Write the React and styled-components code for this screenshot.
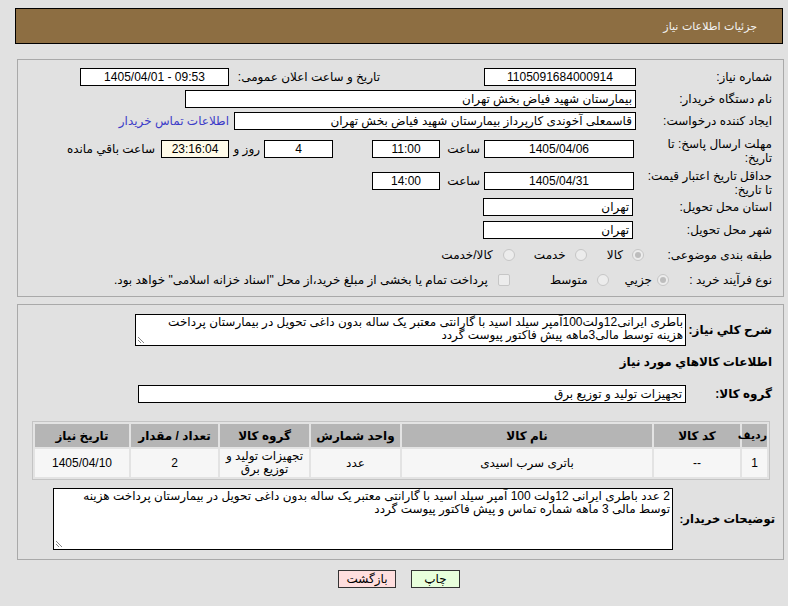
import React from 'react';
import styled, { createGlobalStyle } from 'styled-components';

const Global = createGlobalStyle`
  html, body { margin: 0; padding: 0; background: #e1e1e1; }
  body { font-family: "Liberation Sans", "DejaVu Sans", sans-serif; font-size: 12px; color: #000; }
`;

const Page = styled.div`
  direction: rtl;
  width: 788px;
  box-sizing: border-box;
  padding: 8px 5px 0 15px;
`;

const Header = styled.div`
  height: 34px;
  border: 1px solid #000;
  background: #8d6e42;
  color: #f4f4f4;
  display: flex;
  align-items: center;
  padding-right: 25px;
  font-family: "DejaVu Sans", sans-serif;
  font-size: 11px;
`;

const Panel = styled.div`
  margin: ${p => p.mt || 0}px -1px 0 2px;
  border: 1px solid #a9a9a9;
  padding: ${p => p.pad};
  display: flex;
  flex-direction: column;
`;

const Row = styled.div`
  display: flex;
  align-items: center;
  height: ${p => p.h}px;
  margin-top: ${p => p.mt || 0}px;
  flex-shrink: 0;
`;

const Label = styled.div`
  width: ${p => p.w || 147}px;
  flex-shrink: 0;
  box-sizing: border-box;
  padding-right: ${p => p.pr ?? 11}px;
  line-height: 14px;
  white-space: nowrap;
  font-weight: ${p => (p.bold ? 'bold' : 'normal')};
  font-size: ${p => p.fs || 12}px;
  margin-top: ${p => p.mt || 0}px;
`;

const Field = styled.div`
  width: ${p => p.w}px;
  height: 18px;
  box-sizing: border-box;
  flex-shrink: 0;
  border: 1px solid #000;
  background: ${p => p.bg || '#fff'};
  margin-right: ${p => p.mr || 0}px;
  text-align: ${p => p.align || 'center'};
  direction: ${p => (p.ltr ? 'ltr' : 'rtl')};
  line-height: 16px;
  padding: 0 3px;
  white-space: nowrap;
  overflow: hidden;
`;

const Text = styled.span`
  flex-shrink: 0;
  white-space: nowrap;
  margin-right: ${p => p.mr || 0}px;
  width: ${p => (p.w ? `${p.w}px` : 'auto')};
  color: ${p => p.color || '#000'};
`;

const Radio = styled.span`
  width: 12px;
  height: 12px;
  box-sizing: border-box;
  flex-shrink: 0;
  border-radius: 50%;
  border: 1px solid #c6c6c6;
  background: #ececec;
  margin-right: ${p => p.mr || 0}px;
  display: flex;
  align-items: center;
  justify-content: center;
  &::after {
    content: '';
    width: 6px;
    height: 6px;
    border-radius: 50%;
    background: ${p => (p.on ? '#bdbdbd' : 'transparent')};
  }
`;

const Check = styled.span`
  width: 12px;
  height: 12px;
  box-sizing: border-box;
  flex-shrink: 0;
  border: 1px solid #c6c6c6;
  background: #ececec;
  border-radius: 2px;
  margin-right: ${p => p.mr || 0}px;
`;

const Heading = styled.div`
  font-weight: bold;
  padding-right: 11px;
  line-height: 14px;
  margin-top: ${p => p.mt}px;
`;

const TextBox = styled.div`
  position: relative;
  width: ${p => p.w}px;
  height: ${p => p.h}px;
  box-sizing: border-box;
  flex-shrink: 0;
  border: 1px solid #000;
  background: #fff;
  padding: 1px 2px 0;
  line-height: 13px;
  overflow: hidden;
  div { white-space: nowrap; }
`;

const Grip = styled.svg`
  position: absolute;
  left: 1px;
  bottom: 1px;
`;

const Table = styled.table`
  table-layout: fixed;
  width: 738px;
  margin: ${p => p.mt}px 13px 0 0;
  border: 1px solid #c4c4c4;
  border-spacing: 2px;
  background: #e3e3e3;
  font-size: 12px;
  th {
    background: #b5b5b5;
    height: 23px;
    font-weight: bold;
    padding: 0;
    white-space: nowrap;
  }
  th.narrow { font-size: 11px; letter-spacing: -0.5px; }
  td {
    background: #f6f6f6;
    height: 28px;
    text-align: center;
    padding: 0;
    line-height: 13px;
  }
`;

const Buttons = styled.div`
  display: flex;
  justify-content: center;
  gap: 15px;
  margin-top: 10px;
`;

const Button = styled.div`
  width: ${p => p.w}px;
  height: 18px;
  box-sizing: border-box;
  border: 1px solid #333;
  background: ${p => p.bg};
  text-align: center;
  line-height: 16px;
`;

const ResizeGrip = () => (
  <Grip width="8" height="8" viewBox="0 0 8 8">
    <path d="M1 1L7 7M1 4L4 7" stroke="#888" strokeWidth="1" fill="none" />
  </Grip>
);

const cols = [25, 86, 250, 89, 89, 87, 94];

export default function App() {
  return (
    <Page>
      <Global />
      <Header>جزئیات اطلاعات نیاز</Header>

      <Panel mt={15} pad="6px 0 6px 0">
        <Row h={22}>
          <Label>شماره نیاز:</Label>
          <Field w={152}>1105091684000914</Field>
          <Text mr={104} w={144}>تاریخ و ساعت اعلان عمومی:</Text>
          <Field w={149} mr={7} ltr>1405/04/01 - 09:53</Field>
        </Row>
        <Row h={22}>
          <Label>نام دستگاه خریدار:</Label>
          <Field w={451} align="right">بیمارستان شهید فیاض بخش تهران</Field>
        </Row>
        <Row h={22}>
          <Label>ایجاد کننده درخواست:</Label>
          <Field w={402} align="right">قاسمعلی آخوندی کارپرداز بیمارستان شهید فیاض بخش تهران</Field>
          <Text mr={5} color="#3c3cc8">اطلاعات تماس خریدار</Text>
        </Row>
        <Row h={33}>
          <Label mt={5}>مهلت ارسال پاسخ: تا<br />تاریخ:</Label>
          <Field w={150} mr={2}>1405/04/06</Field>
          <Text mr={4} w={33}>ساعت</Text>
          <Field w={68} mr={7}>11:00</Field>
          <Field w={69} mr={39}>4</Field>
          <Text mr={4} w={23}>روز و</Text>
          <Field w={68} mr={8} bg="#fffbe9">23:16:04</Field>
          <Text mr={6}>ساعت باقي مانده</Text>
        </Row>
        <Row h={31}>
          <Label mt={4}>حداقل تاریخ اعتبار قیمت:<br />تا تاریخ:</Label>
          <Field w={150} mr={2}>1405/04/31</Field>
          <Text mr={4} w={33}>ساعت</Text>
          <Field w={68} mr={7}>14:00</Field>
        </Row>
        <Row h={22}>
          <Label>استان محل تحویل:</Label>
          <Field w={150} mr={3} align="right">تهران</Field>
        </Row>
        <Row h={23}>
          <Label>شهر محل تحویل:</Label>
          <Field w={150} mr={3} align="right">تهران</Field>
        </Row>
        <Row h={28}>
          <Label w={139}>طبقه بندی موضوعی:</Label>
          <Radio on />
          <Text mr={9}>کالا</Text>
          <Radio mr={20} />
          <Text mr={9}>خدمت</Text>
          <Radio mr={19} />
          <Text mr={10}>کالا/خدمت</Text>
        </Row>
        <Row h={21}>
          <Label w={114}>نوع فرآیند خرید :</Label>
          <Radio on />
          <Text mr={5}>جزیي</Text>
          <Radio mr={16} />
          <Text mr={9}>متوسط</Text>
          <Check mr={40} />
          <Text mr={10}>پرداخت تمام یا بخشی از مبلغ خرید،از محل "اسناد خزانه اسلامی" خواهد بود.</Text>
        </Row>
      </Panel>

      <Panel mt={7} pad="9px 0 9px 0">
        <Row h={32}>
          <Label w={97} bold>شرح کلي نیاز:</Label>
          <TextBox w={551} h={32}>
            <div>باطری ایرانی12ولت100آمپر سیلد اسید با گارانتی معتبر یک ساله بدون داغی تحویل در بیمارستان پرداخت</div>
            <div>هزینه توسط مالی3ماهه پیش فاکتور پیوست گردد</div>
            <ResizeGrip />
          </TextBox>
        </Row>
        <Heading mt={9}>اطلاعات کالاهاي مورد نیاز</Heading>
        <Row h={18} mt={16}>
          <Label w={97} bold>گروه کالا:</Label>
          <Field w={548} align="right">تجهیزات تولید و توزیع برق</Field>
        </Row>
        <Table mt={18}>
          <colgroup>
            {cols.map((w, i) => <col key={i} style={{ width: w }} />)}
          </colgroup>
          <thead>
            <tr>
              <th className="narrow">ردیف</th>
              <th>کد کالا</th>
              <th>نام کالا</th>
              <th>واحد شمارش</th>
              <th>گروه کالا</th>
              <th>تعداد / مقدار</th>
              <th>تاریخ نیاز</th>
            </tr>
          </thead>
          <tbody>
            <tr>
              <td>1</td>
              <td>--</td>
              <td>باتری سرب اسیدی</td>
              <td>عدد</td>
              <td>تجهیزات تولید و توزیع برق</td>
              <td>2</td>
              <td>1405/04/10</td>
            </tr>
          </tbody>
        </Table>
        <Row h={62} mt={8}>
          <Label w={110} pr={8} fs={11.5} bold>توضیحات خریدار:</Label>
          <TextBox w={620} h={62}>
            <div>2 عدد باطری ایرانی 12ولت 100 آمپر سیلد اسید با گارانتی معتبر یک ساله بدون داغی تحویل در بیمارستان پرداخت هزینه</div>
            <div>توسط مالی 3 ماهه شماره تماس و پیش فاکتور پیوست گردد</div>
            <ResizeGrip />
          </TextBox>
        </Row>
      </Panel>

      <Buttons>
        <Button w={49} bg="#e8ffdc">چاپ</Button>
        <Button w={58} bg="#ffdede">بازگشت</Button>
      </Buttons>
    </Page>
  );
}
